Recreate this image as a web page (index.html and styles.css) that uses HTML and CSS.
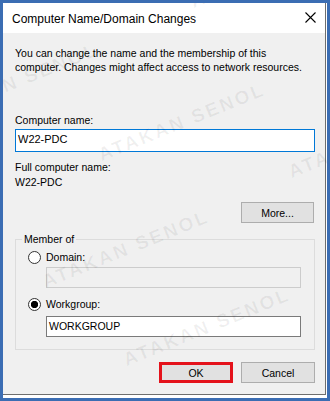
FILE: index.html
```html
<!DOCTYPE html>
<html lang="en">
<head>
<meta charset="utf-8">
<title>Computer Name/Domain Changes</title>
<link rel="stylesheet" href="styles.css">
</head>
<body>
<div class="frame">
  <div class="window">
    <div class="titlebar">
      <span class="title">Computer Name/Domain Changes</span>
      <svg class="close" width="11" height="11" viewBox="0 0 11 11"><path d="M0.5 0.5 L10.5 10.5 M10.5 0.5 L0.5 10.5" stroke="#000" stroke-width="1.1" fill="none"/></svg>
    </div>
    <div class="content">
      <p class="intro">You can change the name and the membership of this<br>computer. Changes might affect access to network resources.</p>
      <div class="label name-label">Computer name:</div>
      <div class="field focused">W22-PDC</div>
      <div class="label full-label">Full computer name:</div>
      <div class="label full-value">W22-PDC</div>
      <div class="more-row"><button class="btn">More...</button></div>
      <fieldset class="group">
        <legend class="legend">Member of</legend>
        <div class="radio-row first"><span class="radio"></span><span>Domain:</span></div>
        <div class="field disabled sub"></div>
        <div class="radio-row second"><span class="radio checked"></span><span>Workgroup:</span></div>
        <div class="field plain sub wg">WORKGROUP</div>
      </fieldset>
      <div class="actions">
        <button class="btn ok">OK</button>
        <button class="btn">Cancel</button>
      </div>
    </div>
  </div>
  <span class="wm wm1">ATAKAN SENOL</span>
  <span class="wm wm2">ATAKAN SENOL</span>
  <span class="wm wm3">ATAKAN SENOL</span>
  <span class="wm wm4">ATAKAN SENOL</span>
  <span class="wm wm5">ATAKAN SENOL</span>
  <span class="wm wm6">ATAKAN SENOL</span>
</div>
</body>
</html>
```

FILE: styles.css
```css
* { box-sizing: border-box; }
html, body { margin: 0; padding: 0; }
body {
  width: 330px;
  height: 401px;
  overflow: hidden;
  background: #3b6db3;
  font-family: "Liberation Sans", Arial, sans-serif;
  font-size: 10.5px;
  color: #000;
}
.frame {
  position: relative;
  overflow: hidden;
  margin: 3px 0 0 3px;
  width: 324px;
  height: 395px;
  background: #ffffff;
  padding: 0 1px 3px 0;
}
.window {
  height: 100%;
  display: flex;
  flex-direction: column;
  background: #f0f0f0;
  border-right: 1px solid #6e6e6e;
  border-bottom: 1px solid #6e6e6e;
}
.titlebar {
  height: 30px;
  flex: none;
  background: #ffffff;
  display: flex;
  align-items: center;
  justify-content: space-between;
  padding: 2px 9px 0 9px;
}
.title {
  font-size: 12px;
  line-height: 14px;
}
.close { display: block; margin-top: -3px; }
.content {
  flex: 1;
  display: flex;
  flex-direction: column;
  padding: 13px 10px 0 12px;
}
.intro {
  margin: 0;
  line-height: 14px;
  white-space: nowrap;
}
.label { line-height: 14px; }
.name-label { margin-top: 39px; }
.full-label { margin-top: 8px; }
.full-value { margin-top: 1px; }
.field {
  height: 23px;
  margin-top: 2px;
  padding: 2px 2px 0 2px;
  line-height: 14px;
  background: #ffffff;
  border: 1px solid #7a7a7a;
}
.field.focused { border-color: #0078d7; font-size: 11px; }
.field.sub {
  height: 21px;
  width: 255px;
  margin-left: 24px;
  padding-top: 2px;
}
.field.disabled {
  margin-top: 3px;
  background: #f0f0f0;
  border-color: #cccccc;
}
.field.wg { margin-top: 5px; }
.more-row {
  display: flex;
  justify-content: flex-end;
  margin-top: 13px;
}
.btn {
  width: 74px;
  height: 21px;
  margin: 0;
  padding: 0;
  background: #e1e1e1;
  border: 1px solid #adadad;
  font-family: "Liberation Sans", Arial, sans-serif;
  font-size: 10.5px;
  color: #000;
  line-height: 14px;
}
.more-row .btn { margin-right: 1px; width: 73px; }
.group {
  margin: 9px 0 0 0;
  padding: 0 6px 12px 6px;
  border: 1px solid #dcdcdc;
  min-width: 0;
}
.legend {
  padding: 0 2px;
  line-height: 14px;
}
.radio-row {
  display: flex;
  align-items: center;
  gap: 5px;
  line-height: 14px;
  margin-left: 6px;
}
.radio-row.first { margin-top: 4px; }
.radio-row.second { margin-top: 9px; }
.radio {
  width: 13px;
  height: 13px;
  border-radius: 50%;
  border: 1px solid #333333;
  background: #ffffff;
  flex: none;
}
.radio.checked {
  background: radial-gradient(circle, #000 0, #000 3.4px, #fff 3.9px);
}
.actions {
  display: flex;
  justify-content: flex-end;
  gap: 8px;
  margin-top: 12px;
}
.btn.ok { border: 3px solid #e4121b; }
.wm {
  position: absolute;
  white-space: nowrap;
  font-family: "Liberation Sans", Arial, sans-serif;
  font-weight: bold;
  font-size: 19px;
  line-height: 20px;
  letter-spacing: 2.5px;
  color: rgba(0, 0, 0, 0.06);
  transform-origin: 0 100%;
  transform: rotate(-22deg);
  pointer-events: none;
}
.wm1 { left: -67px; top: 102px; }
.wm2 { left: 100px; top: 142px; }
.wm3 { left: 290px; top: 159px; }
.wm4 { left: 44px; top: 269px; }
.wm5 { left: 125px; top: 347px; }
.wm6 { left: 192px; top: -11px; }
```
